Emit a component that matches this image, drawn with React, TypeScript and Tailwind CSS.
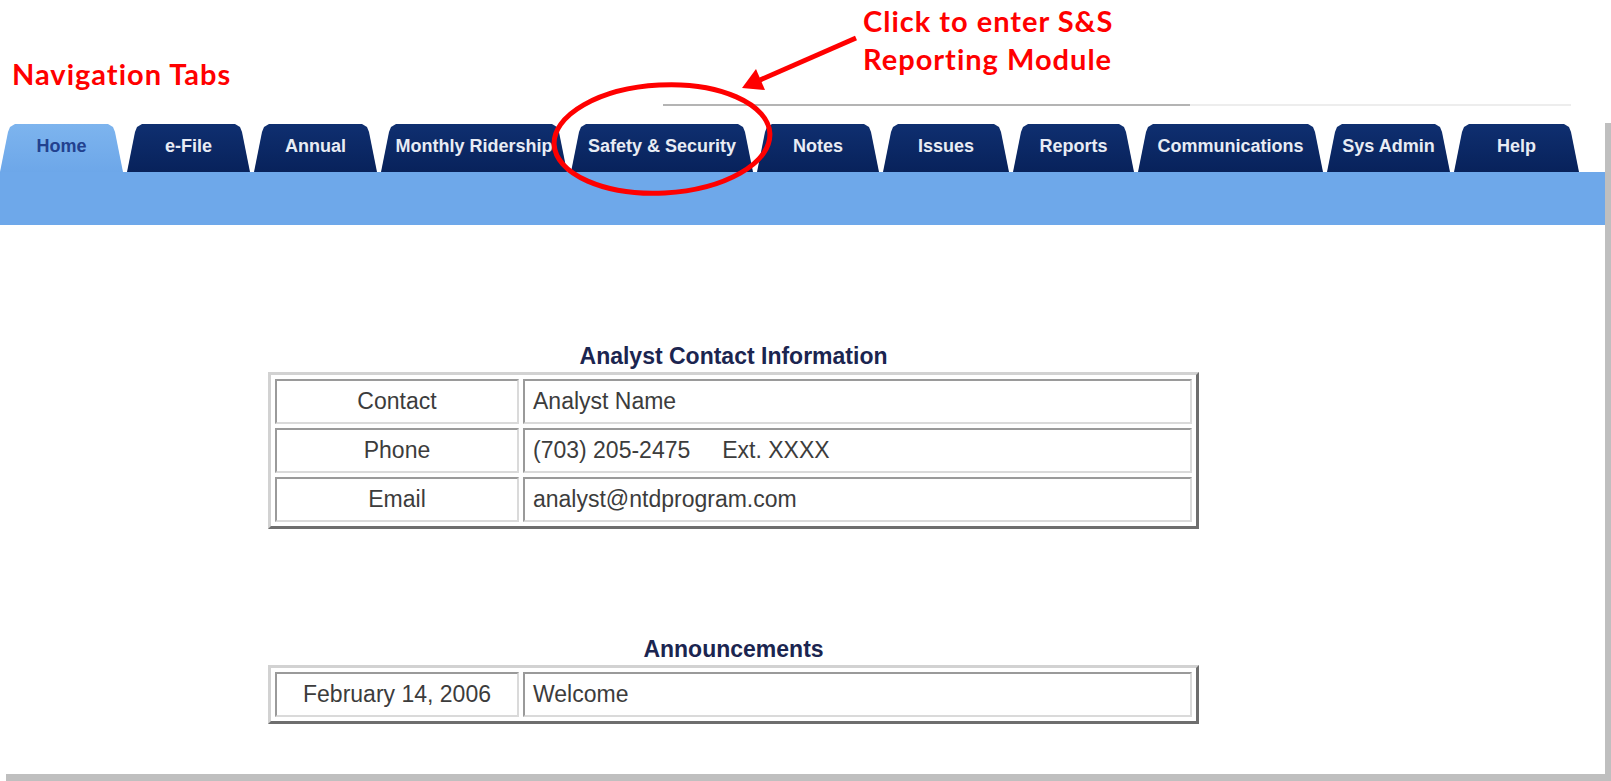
import React from 'react'

interface Tab {
  label: string
  width: string
  active?: boolean
}

const tabs: Tab[] = [
  { label: 'Home', width: 'w-[123px]', active: true },
  { label: 'e-File', width: 'w-[123px]' },
  { label: 'Annual', width: 'w-[123px]' },
  { label: 'Monthly Ridership', width: 'w-[186px]' },
  { label: 'Safety & Security', width: 'w-[182px]' },
  { label: 'Notes', width: 'w-[122px]' },
  { label: 'Issues', width: 'w-[126px]' },
  { label: 'Reports', width: 'w-[121px]' },
  { label: 'Communications', width: 'w-[185px]' },
  { label: 'Sys Admin', width: 'w-[123px]' },
  { label: 'Help', width: 'w-[125px]' },
]

const contactRows = [
  { label: 'Contact', value: 'Analyst Name' },
  { label: 'Phone', value: '(703) 205-2475     Ext. XXXX' },
  { label: 'Email', value: 'analyst@ntdprogram.com' },
]

// trapezoid tab with softened top corners
const tabShape =
  '[clip-path:polygon(0_100%,8px_8px,10px_3px,15px_0,calc(100%_-_15px)_0,calc(100%_-_10px)_3px,calc(100%_-_8px)_8px,100%_100%)]'

const cellBase =
  'h-[45px] border-2 border-t-[#9a9a9a] border-l-[#9a9a9a] border-b-[#dadada] border-r-[#dadada] text-[23px] text-[#3c3c3c]'

function NavTab({ tab }: { tab: Tab }) {
  return (
    <div
      className={`${tab.width} ${tabShape} flex h-[48px] items-center justify-center pb-[4px] text-[18px] font-bold whitespace-nowrap ${
        tab.active
          ? 'bg-gradient-to-b from-[#7db4ee] to-[#6da7e9] text-[#22418f]'
          : 'bg-gradient-to-b from-[#0f2f70] to-[#08225b] text-[#e8ecf4]'
      }`}
    >
      {tab.label}
    </div>
  )
}

function InfoTable({ title, children }: { title: string; children: React.ReactNode }) {
  return (
    <div className="ml-[268px] w-[931px]">
      <h2 className="mb-[2px] h-[28px] text-center text-[23px] leading-[28px] font-bold text-[#1b2550]">{title}</h2>
      <table className="w-[931px] table-fixed border-separate border-spacing-[4px] border-[3px] border-t-[#d2d2d2] border-l-[#d2d2d2] border-b-[#6e6e6e] border-r-[#6e6e6e]">
        <colgroup>
          <col className="w-[244px]" />
          <col />
        </colgroup>
        <tbody>{children}</tbody>
      </table>
    </div>
  )
}

export default function App() {
  return (
    <div className="relative h-[781px] w-[1611px] overflow-hidden bg-white font-['Liberation_Sans',Arial,sans-serif]">
      {/* callout labels */}
      <div className="flex h-[116px] flex-col">
        <div className="grid h-[104px] grid-cols-[863px_1fr] font-['Lato','Open_Sans',sans-serif] text-[29px] leading-[38px] font-bold tracking-[1px] text-[#ff0000]">
          <div className="pt-[55px] pl-[12px]">Navigation Tabs</div>
          <div className="pt-[2px]">
            Click to enter S&amp;S
            <br />
            Reporting Module
          </div>
        </div>
        <div className="ml-[663px] flex h-[2px] w-[908px]">
          <div className="w-[527px] bg-[#b4b4b4]" />
          <div className="flex-1 bg-[#ededed]" />
        </div>
      </div>

      {/* application window */}
      <div className="h-[658px] w-[1605px] bg-white pt-[8px] shadow-[6px_7px_0_#bfbfbf]">
        <div className="flex h-[48px] gap-[4px]">
          {tabs.map((tab) => (
            <NavTab key={tab.label} tab={tab} />
          ))}
        </div>
        <div className="h-[53px] bg-[#6ea8ea]" />

        <div className="pt-[117px]">
          <InfoTable title="Analyst Contact Information">
            {contactRows.map((row) => (
              <tr key={row.label}>
                <td className={`${cellBase} text-center`}>{row.label}</td>
                <td className={`${cellBase} pl-[8px] whitespace-pre`}>{row.value}</td>
              </tr>
            ))}
          </InfoTable>

          <div className="mt-[106px]">
            <InfoTable title="Announcements">
              <tr>
                <td className={`${cellBase} text-center`}>February 14, 2006</td>
                <td className={`${cellBase} pl-[8px]`}>Welcome</td>
              </tr>
            </InfoTable>
          </div>
        </div>
      </div>

      {/* red markup: arrow and circle around the S&S tab */}
      <svg className="pointer-events-none absolute inset-0" width="1611" height="781" viewBox="0 0 1611 781">
        <ellipse cx="662" cy="139" rx="108" ry="54" fill="none" stroke="#ff0000" strokeWidth="5" transform="rotate(-3 662 139)" />
        <line x1="856" y1="38" x2="760" y2="80" stroke="#ff0000" strokeWidth="5" />
        <polygon points="742,88 756,69 765,90" fill="#ff0000" />
      </svg>
    </div>
  )
}
